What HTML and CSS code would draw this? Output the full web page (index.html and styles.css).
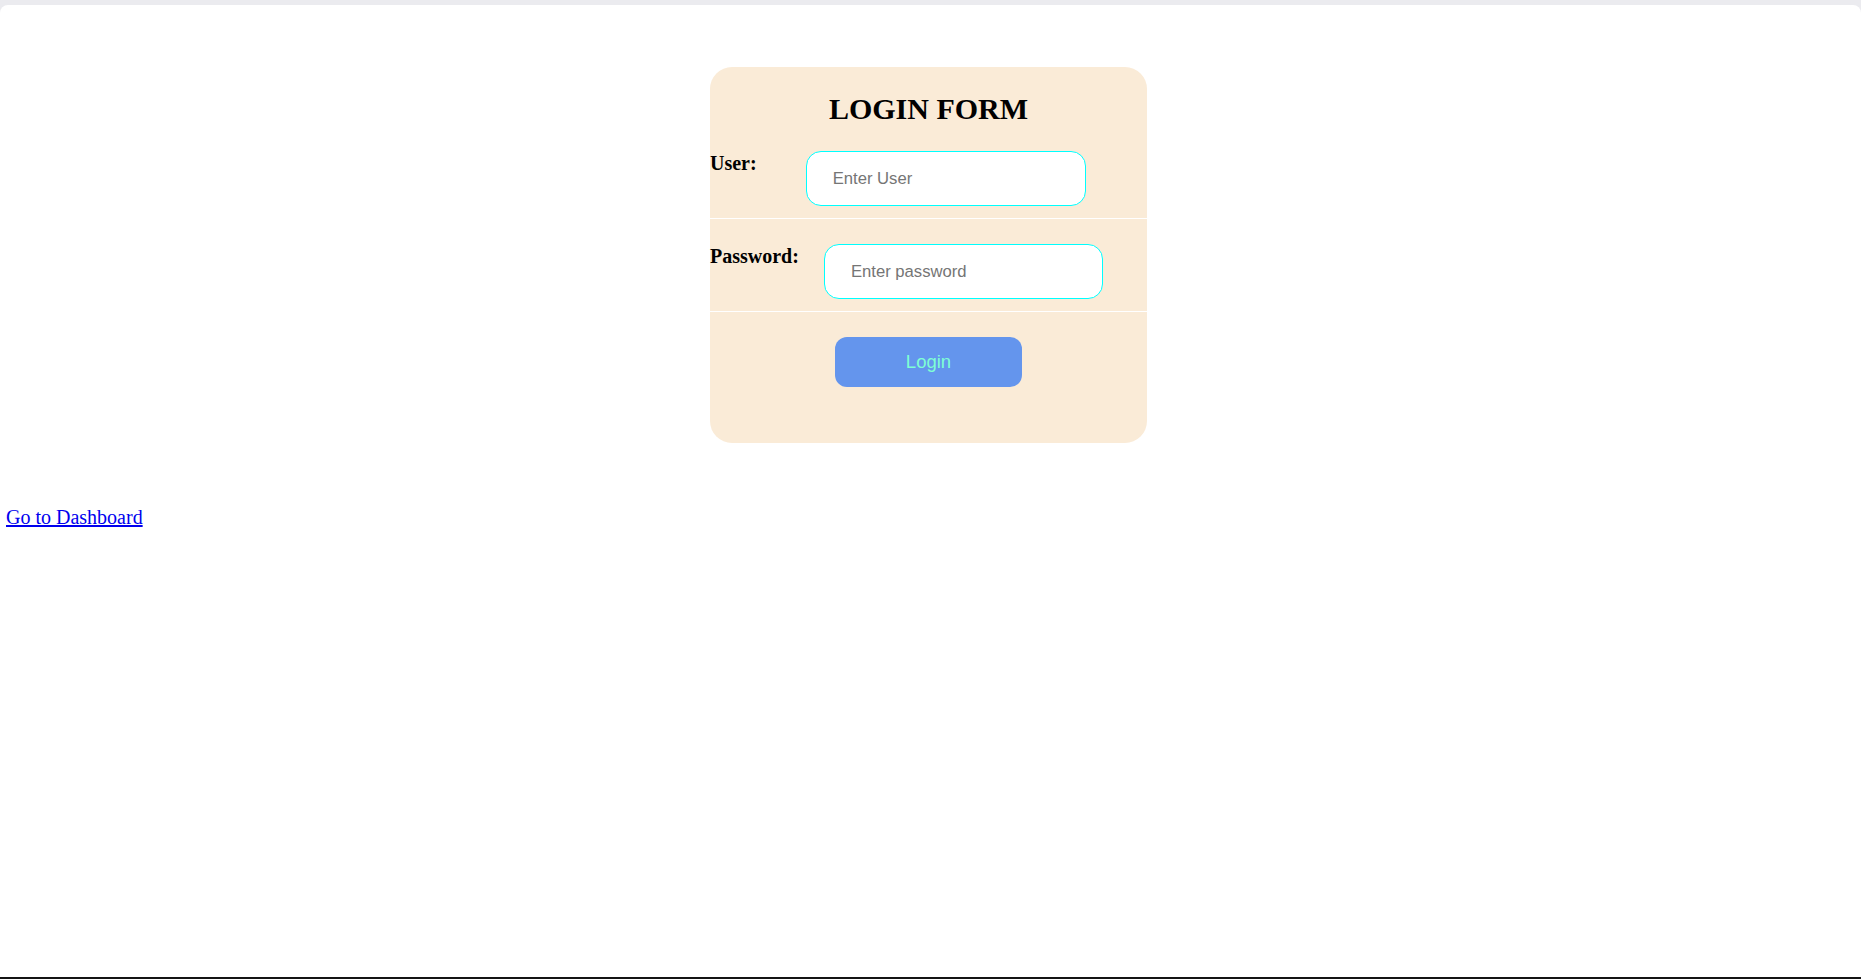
FILE: index.html
```html
<!DOCTYPE html>
<html lang="en">
<head>
<meta charset="utf-8">
<title>Login Form</title>
<link rel="stylesheet" href="styles.css">
</head>
<body>
<div class="viewport">
  <div class="center">
    <form class="card">
      <h2 class="title">LOGIN FORM</h2>
      <div class="row">
        <label class="label" for="user">User:</label>
        <input class="field field-user" id="user" type="text" placeholder="Enter User">
      </div>
      <div class="sep"></div>
      <div class="row">
        <label class="label" for="pass">Password:</label>
        <input class="field field-pass" id="pass" type="password" placeholder="Enter password">
      </div>
      <div class="sep"></div>
      <button class="btn" type="button">Login</button>
    </form>
  </div>
  <div class="links">
    <a class="dash-link" href="#">Go to Dashboard</a>
  </div>
</div>
<div class="bottom-line"></div>
</body>
</html>
```
FILE: styles.css
```css
html, body {
  margin: 0;
  padding: 0;
}
body {
  height: 979px;
  display: flex;
  flex-direction: column;
  background: #ebebef;
  font-family: "Liberation Serif", "Times New Roman", serif;
  overflow: hidden;
}
.viewport {
  margin-top: 5px;
  flex: 1;
  background: #ffffff;
  border-radius: 8px 8px 0 0;
  padding-top: 62px;
}
.bottom-line {
  height: 2px;
  background: #141414;
}
.center {
  display: flex;
  justify-content: center;
  padding-right: 4px;
}
.card {
  box-sizing: border-box;
  width: 437px;
  height: 376px;
  background: #faebd7;
  border-radius: 22px;
  display: flow-root;
}
.title {
  margin: 24px 0 25px;
  font-size: 30px;
  line-height: 35px;
  font-weight: bold;
  text-align: center;
  color: #000;
}
.row {
  display: flex;
  align-items: flex-start;
}
.label {
  font-size: 20px;
  line-height: 24px;
  font-weight: bold;
  color: #000;
}
.field {
  box-sizing: border-box;
  height: 55px;
  border: 1.25px solid #00ffff;
  border-radius: 15px;
  padding: 0 26px;
  background: #fff;
  font-family: "Liberation Sans", Arial, sans-serif;
  font-size: 16.67px;
  color: #000;
  outline: none;
}
.field::placeholder {
  color: #757575;
}
.field-user {
  width: 280px;
  margin-left: 49px;
}
.field-pass {
  width: 279px;
  margin-left: 25px;
}
.sep {
  border-top: 1px solid #ffffff;
  margin: 12px 0 25px;
}
.btn {
  display: block;
  margin: 0 auto;
  width: 187px;
  height: 50px;
  border: none;
  border-radius: 12px;
  background: #6495ed;
  color: #7fffd4;
  font-family: "Liberation Sans", Arial, sans-serif;
  font-size: 18.5px;
  padding: 0;
}
.links {
  margin-top: 63px;
  padding-left: 6px;
  font-size: 20px;
  line-height: 23px;
}
.dash-link {
  color: #0000ee;
  text-decoration: underline;
}
```
